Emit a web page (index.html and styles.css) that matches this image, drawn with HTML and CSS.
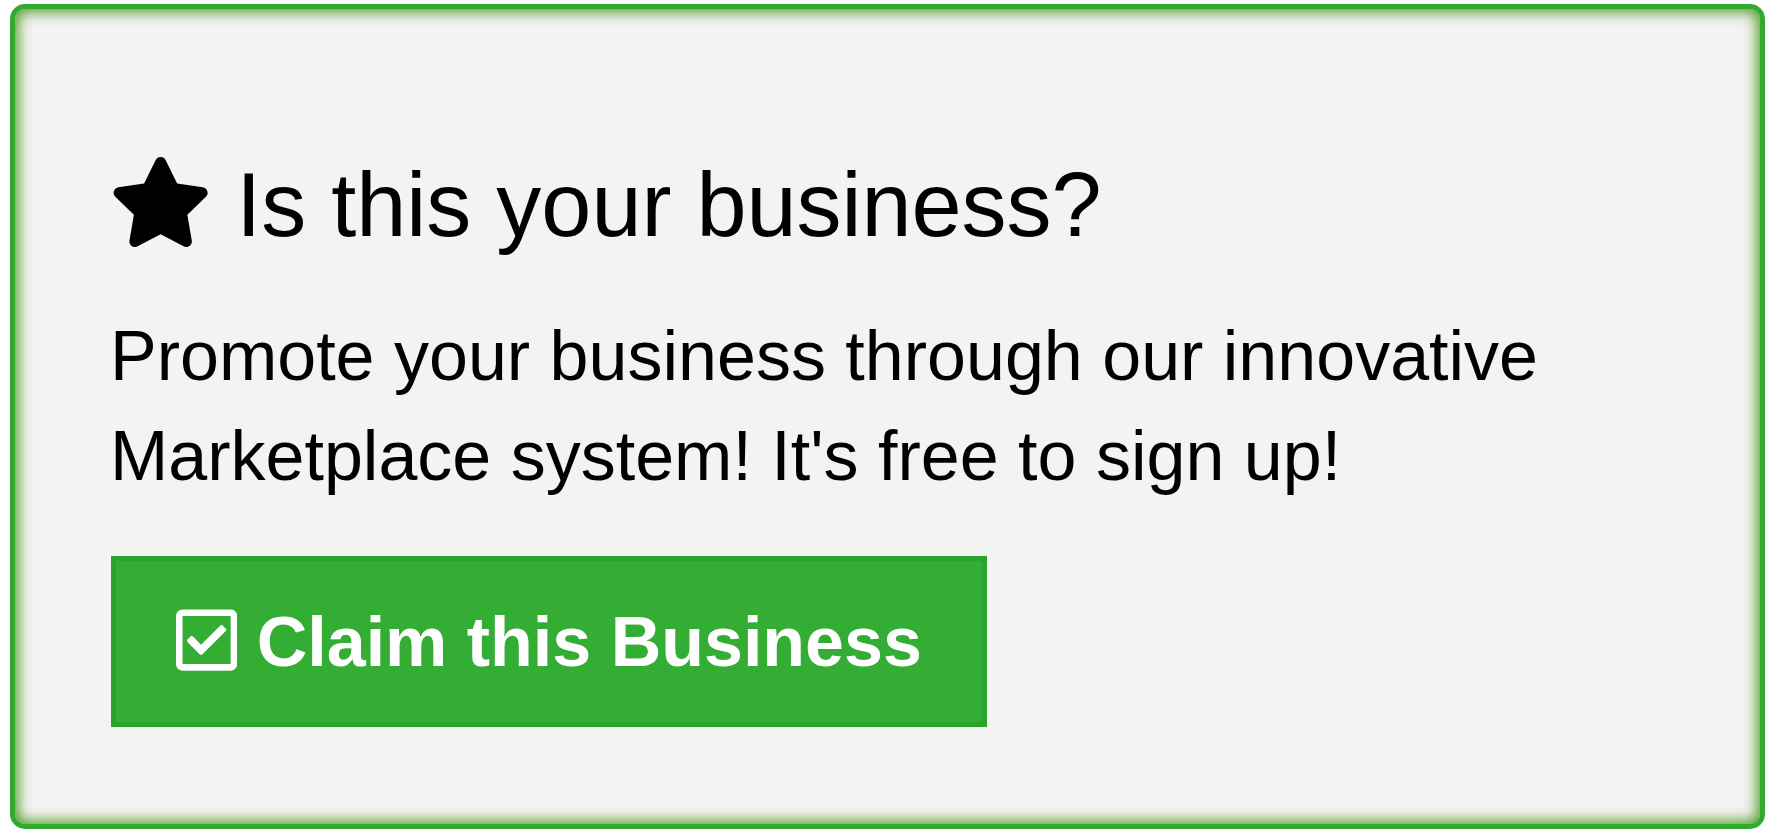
FILE: index.html
```html
<!DOCTYPE html>
<html lang="en">
<head>
<meta charset="utf-8">
<title>Is this your business?</title>
<link rel="stylesheet" href="styles.css">
</head>
<body>
<div class="claim-card">
  <h2 class="claim-title"><svg class="icon icon-star" viewBox="0 0 576 512" aria-hidden="true"><path d="M259.3 17.8L194 150.2 47.9 171.5c-26.2 3.8-36.7 36.1-17.7 54.6l105.7 103-25 145.5c-4.5 26.3 23.2 46 46.4 33.7L288 439.6l130.7 68.7c23.2 12.2 50.9-7.4 46.4-33.7l-25-145.5 105.7-103c19-18.5 8.5-50.8-17.7-54.6L382 150.2 316.7 17.8c-11.7-23.6-45.6-23.9-57.4 0z"/></svg> Is this your business?</h2>
  <p class="claim-text">Promote your business through our innovative Marketplace system! It's free to sign up!</p>
  <a class="claim-button" href="#"><svg class="icon icon-check" viewBox="0 0 448 512" aria-hidden="true"><path d="M400 32H48C21.490 32 0 53.49 0 80v352c0 26.51 21.49 48 48 48h352c26.51 0 48-21.49 48-48V80c0-26.51-21.49-48-48-48zm0 400H48V80h352v352zm-35.864-241.724L191.547 361.48c-4.705 4.667-12.303 4.637-16.97-.068l-90.781-91.516c-4.667-4.705-4.637-12.303.069-16.971l22.719-22.536c4.705-4.667 12.303-4.637 16.970.069l59.792 60.277 141.352-140.216c4.705-4.667 12.303-4.637 16.970.068l22.536 22.718c4.667 4.706 4.637 12.304-.068 16.971z"/></svg> Claim this Business</a>
</div>
</body>
</html>
```

FILE: styles.css
```css
html, body {
  margin: 0;
  padding: 0;
  background: #ffffff;
}

body {
  font-family: "Liberation Sans", Arial, sans-serif;
  color: #000000;
}

.claim-card {
  box-sizing: border-box;
  height: 825px;
  margin: 4px 8px 5px 10px;
  padding: 147px 95px 0 95px;
  background: #f3f3f3;
  border: 5px solid #31aa31;
  border-radius: 15px;
  box-shadow: inset 0 0 14px 3px rgba(70, 150, 20, 0.95);
}

.claim-title {
  margin: 0 0 51px 0;
  font-size: 90px;
  font-weight: normal;
  line-height: 1.1;
}

.icon {
  display: inline-block;
  height: 1em;
  vertical-align: -0.125em;
  fill: currentColor;
}

.icon-star {
  width: 1.125em;
}

.icon-check {
  width: 0.875em;
}

.claim-text {
  margin: 0 0 50px 0;
  font-size: 70px;
  line-height: 100px;
}

.claim-button {
  display: inline-block;
  margin-left: 1px;
  padding: 41px 60px 40px 60px;
  background: #33ad33;
  border: 5px solid #2aa32a;
  color: #ffffff;
  font-size: 70px;
  font-weight: bold;
  line-height: normal;
  text-decoration: none;
}
```
